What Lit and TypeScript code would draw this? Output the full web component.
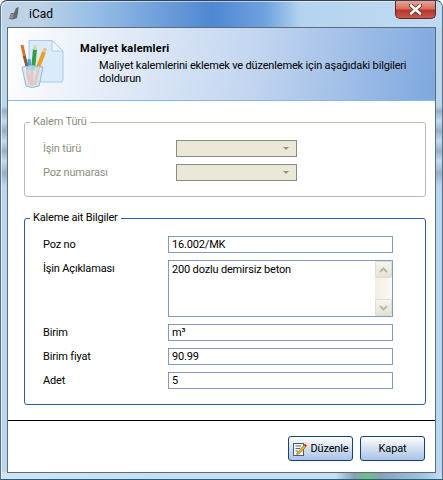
import { LitElement, html, css } from "lit";
import { customElement } from "lit/decorators.js";

@customElement("app-root")
export class AppRoot extends LitElement {
  static styles = css`
    :host { display: block; width: 443px; height: 480px; overflow: hidden; font-family: Roboto, "Liberation Sans", sans-serif; font-size: 11px; letter-spacing: -.17px; color: #000; }
    * { box-sizing: border-box; }
    .frame { width: 443px; height: 480px; display: flex; flex-direction: column; border: 1px solid #5b7186; border-top-color: #2f4456; border-bottom-color: #1f6478; border-radius: 7px 7px 0 0; padding: 0 6px 6px 6px; box-shadow: inset 1px 1px 0 rgba(255,255,255,.55);
      background:
        linear-gradient(90deg, rgba(190,210,230,.9) 8%, rgba(150,190,230,.9) 20%, #4f87d2 48%, #6fa3df 60%, #b5d3ef 68%, #c0daf2 100%) top/100% 27px no-repeat,
        linear-gradient(90deg, #cfe3f6 0%, #c5def4 40%, #c5def4 76%, #8aa0b8 80%, #70c080 83%, #8aa0b8 86%, #a0c0dc 95%, #c5def4 100%) bottom/100% 7px no-repeat,
        linear-gradient(180deg, #b9d6ee 0 105px, #98aec4 110px, #c3dcf2 120px, #98aec4 130px, #c3dcf2 140px, #98aec4 150px, #c3dcf2 160px, #98aec4 172px, #b9d6ee 185px, #b9d6ee 100%); }
    .title { height: 26px; flex: none; display: flex; align-items: flex-start; position: relative; }
    .app-ico { margin: 6px 0 0 2px; }
    .app-name { margin: 6px 0 0 10px; font-size: 12px; line-height: 14px; letter-spacing: 0; }
    .close { position: absolute; top: 0; right: 0; width: 41px; height: 18px; border: 1px solid #5e2a26; border-top: none; border-radius: 0 0 5px 5px;
      background: linear-gradient(180deg, #e8a596, #d5705f 45%, #b8342a 55%, #c65a4c); display: flex; align-items: center; justify-content: center; }
    .client { flex: 1; min-height: 0; background: #fff; border: 1px solid #5f6b76; display: flex; flex-direction: column; }
    .head { height: 73px; flex: none; display: flex; background: linear-gradient(100deg, #fff, #e6eef9 22%, #c2d5f0 58%, #7ea8df); border-bottom: 1px solid #8ab4e6; }
    .logo { margin: 11px 0 0 11px; flex: none; }
    .head-text { margin: 14px 24px 0 15px; flex: 1; }
    .head-title { font-weight: 700; line-height: 14px; font-size: 11px; letter-spacing: .25px; }
    .head-sub { margin: 3px 0 0 19px; line-height: 13px; }
    .main { flex: 1; padding: 14px 9px 0 16px; display: flex; flex-direction: column; gap: 14px; }
    fieldset { margin: 0; padding: 0; border: 1px solid #bdbdab; border-radius: 3px; }
    legend { margin-left: 5px; padding: 0 3px; line-height: 14px; height: 14px; }
    .g1 { height: 82px; color: #8d8d80; }
    .g2 { height: 194px; border-color: #2c5aa8; }
    .g1 .rows { padding: 11px 0 0 18px; display: grid; grid-template-columns: 133px 121px; gap: 7px 0; align-items: center; }
    .combo { height: 17px; background: #ebe8d8; border: 1px solid #8b8b85; display: flex; justify-content: flex-end; align-items: center; padding-right: 7px; }
    .arrow { width: 0; height: 0; border: 3px solid transparent; border-top: 3px solid #8f8f8c; border-bottom: none; }
    .g2 .rows { padding: 11px 0 0 18px; display: grid; grid-template-columns: 125px 225px; gap: 7px 0; align-items: center; }
    .lab-top { align-self: start; padding-top: 2px; }
    .input { height: 17px; border: 1px solid #7f9db9; padding: 0 3px; line-height: 15px; white-space: nowrap; }
    .area { height: 57px; border: 1px solid #7f9db9; display: flex; justify-content: space-between; }
    .area span { padding: 0 3px; line-height: 15px; margin-top: 1px; }
    .scroll { width: 17px; flex: none; display: flex; flex-direction: column; justify-content: space-between; background: linear-gradient(90deg, #f1efe4, #fbfaf5); }
    .sb { height: 17px; background: linear-gradient(180deg, #f7f6ee, #e4e2d3); border: 1px solid #dfddcf; border-radius: 2px; display: flex; align-items: center; justify-content: center; }
    .foot { height: 52px; flex: none; border-top: 1px solid #000; display: flex; justify-content: flex-end; gap: 7px; padding: 15px 10px 0 0; }
    .btn { width: 65px; height: 25px; border: 1px solid #17406e; border-radius: 3px; background: linear-gradient(180deg, #fff, #d6e2f3 45%, #a9c3e6); display: flex; align-items: center; justify-content: center; gap: 4px; font: inherit; letter-spacing: inherit; padding: 0; color: #000; }
  `;

  render() {
    return html`
      <div class="frame">
        <div class="title">
          <svg class="app-ico" width="10" height="13" viewBox="0 0 10 13"><path d="M0 12 L2 6 L5 6 L7 1 L9.5 0 L9 6 L8 11 L4 12.5 Z" fill="#686868"/><path d="M2 7 L5 7 L4 11 L1 11.5 Z" fill="#8f8f8f"/></svg>
          <span class="app-name">iCad</span>
          <div class="close">
            <svg width="15" height="11" viewBox="0 0 15 11"><path d="M3 1.5 L12 9.5 M12 1.5 L3 9.5" stroke="#5e2a26" stroke-width="4.2" stroke-linecap="round"/><path d="M3 1.5 L12 9.5 M12 1.5 L3 9.5" stroke="#fff" stroke-width="2.6" stroke-linecap="round"/></svg>
          </div>
        </div>
        <div class="client">
          <div class="head">
            <svg class="logo" width="46" height="52" viewBox="0 0 46 52" fill="none">
              <path d="M10 1.5 H33 L44 12 V41 Q44 43 42 43 H12 Q10 43 10 41 Z" fill="#dcebfa" stroke="#a9c9ea"/>
              <path d="M33 1.5 V12 H44 Z" fill="#f4f9ff" stroke="#a9c9ea"/>
              <path d="M5 16 L9 31" stroke="#8a5a3a" stroke-width="3"/><path d="M3 6 L5.5 17" stroke="#e0722b" stroke-width="3"/>
              <path d="M16 10 L14 31" stroke="#2f9e44" stroke-width="4"/><path d="M16.3 6 L16 11" stroke="#c5e0a8" stroke-width="3"/>
              <path d="M25 13 L18 31" stroke="#f0a020" stroke-width="4"/><path d="M26.5 9 L25 13" stroke="#e8c090" stroke-width="3"/>
              <path d="M10 20 L11 31" stroke="#4aa0d8" stroke-width="3"/>
              <path d="M3 28 Q13 25 24 28 L20 47 Q13 50 7 47 Z" fill="#cfe4f6" fill-opacity=".78" stroke="#8fb8de"/>
              <path d="M8 31 L11 46 M13 31 L13 47 M19 31 L16 46" stroke="#eeb7a0" stroke-width="3" opacity=".65"/>
            </svg>
            <div class="head-text">
              <div class="head-title">Maliyet kalemleri</div>
              <div class="head-sub">Maliyet kalemlerini eklemek ve düzenlemek için aşağıdaki bilgileri doldurun</div>
            </div>
          </div>
          <div class="main">
            <fieldset class="g1">
              <legend>Kalem Türü</legend>
              <div class="rows">
                <span>İşin türü</span><div class="combo"><i class="arrow"></i></div>
                <span>Poz numarası</span><div class="combo"><i class="arrow"></i></div>
              </div>
            </fieldset>
            <fieldset class="g2">
              <legend>Kaleme ait Bilgiler</legend>
              <div class="rows">
                <span>Poz no</span><div class="input">16.002/MK</div>
                <span class="lab-top">İşin Açıklaması</span>
                <div class="area"><span>200 dozlu demirsiz beton</span>
                  <div class="scroll">
                    <div class="sb"><svg width="9" height="6" viewBox="0 0 9 6"><path d="M1 5 L4.5 1.5 L8 5" stroke="#b9b8a8" stroke-width="2" fill="none"/></svg></div>
                    <div class="sb"><svg width="9" height="6" viewBox="0 0 9 6"><path d="M1 1 L4.5 4.5 L8 1" stroke="#b9b8a8" stroke-width="2" fill="none"/></svg></div>
                  </div>
                </div>
                <span>Birim</span><div class="input">m³</div>
                <span>Birim fiyat</span><div class="input">90.99</div>
                <span>Adet</span><div class="input">5</div>
              </div>
            </fieldset>
          </div>
          <div class="foot">
            <button class="btn">
              <svg width="14" height="14" viewBox="0 0 14 14"><rect x=".5" y="1.5" width="10" height="12" fill="#f4f7fb" stroke="#4a5a70"/><path d="M2.5 4 H8 M2.5 6.5 H7 M2.5 9 H5" stroke="#5a6a80"/><path d="M4 11 L11 3 L13 5 L6 12 L3.5 12.5 Z" fill="#f0b020" stroke="#7a5a10" stroke-width=".5"/><path d="M11 3 L12 1.5 L13.8 3.5 L13 5 Z" fill="#d02020"/></svg>
              <span>Düzenle</span>
            </button>
            <button class="btn">Kapat</button>
          </div>
        </div>
      </div>
    `;
  }
}
